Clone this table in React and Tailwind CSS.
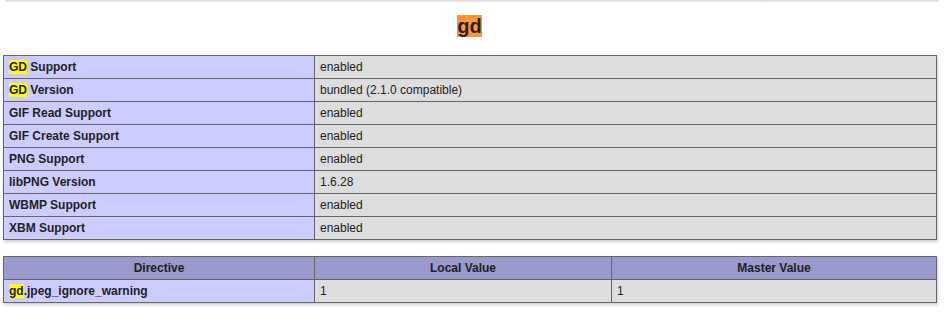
import React from "react";

const Hl = ({ children }) => <span className="bg-[#ffff00]">{children}</span>;

const rows = [
  [<><Hl>GD</Hl> Support</>, "enabled"],
  [<><Hl>GD</Hl> Version</>, "bundled (2.1.0 compatible)"],
  ["GIF Read Support", "enabled"],
  ["GIF Create Support", "enabled"],
  ["PNG Support", "enabled"],
  ["libPNG Version", "1.6.28"],
  ["WBMP Support", "enabled"],
  ["XBM Support", "enabled"],
];

const cell = "border border-[#666] px-[5px] py-[4px] text-[12px] leading-[14px] align-baseline";

export default function App() {
  return (
    <div className="min-h-[316px] bg-white text-[#222] font-['Liberation_Sans',Arial,sans-serif]">
      {/* shadow left over from the table above */}
      <div className="ml-[5px] w-[934px] h-[3px] bg-gradient-to-b from-[#d6d6d6] to-white" />

      <div className="pt-[12px] pr-[6px] text-center">
        <h2 className="text-[20px] leading-[22px] font-bold">
          <span className="bg-[#ff9632]">gd</span>
        </h2>
      </div>

      <table className="mt-[18px] ml-[3px] w-[934px] border-collapse shadow-[1px_2px_3px_#ccc]">
        <tbody>
          {rows.map(([k, v], i) => (
            <tr key={i}>
              <td className={`${cell} w-[311px] bg-[#ccf] font-bold text-left`}>{k}</td>
              <td className={`${cell} bg-[#ddd] text-left`}>{v}</td>
            </tr>
          ))}
        </tbody>
      </table>

      <table className="mt-[16px] ml-[3px] w-[934px] border-collapse shadow-[1px_2px_3px_#ccc]">
        <tbody>
          <tr>
            <th className={`${cell} w-[311px] bg-[#99c] font-bold text-center`}>Directive</th>
            <th className={`${cell} w-[297px] bg-[#99c] font-bold text-center`}>Local Value</th>
            <th className={`${cell} bg-[#99c] font-bold text-center`}>Master Value</th>
          </tr>
          <tr>
            <td className={`${cell} bg-[#ccf] font-bold text-left`}>
              <Hl>gd</Hl>.jpeg_ignore_warning
            </td>
            <td className={`${cell} bg-[#ddd] text-left`}>1</td>
            <td className={`${cell} bg-[#ddd] text-left`}>1</td>
          </tr>
        </tbody>
      </table>
    </div>
  );
}
